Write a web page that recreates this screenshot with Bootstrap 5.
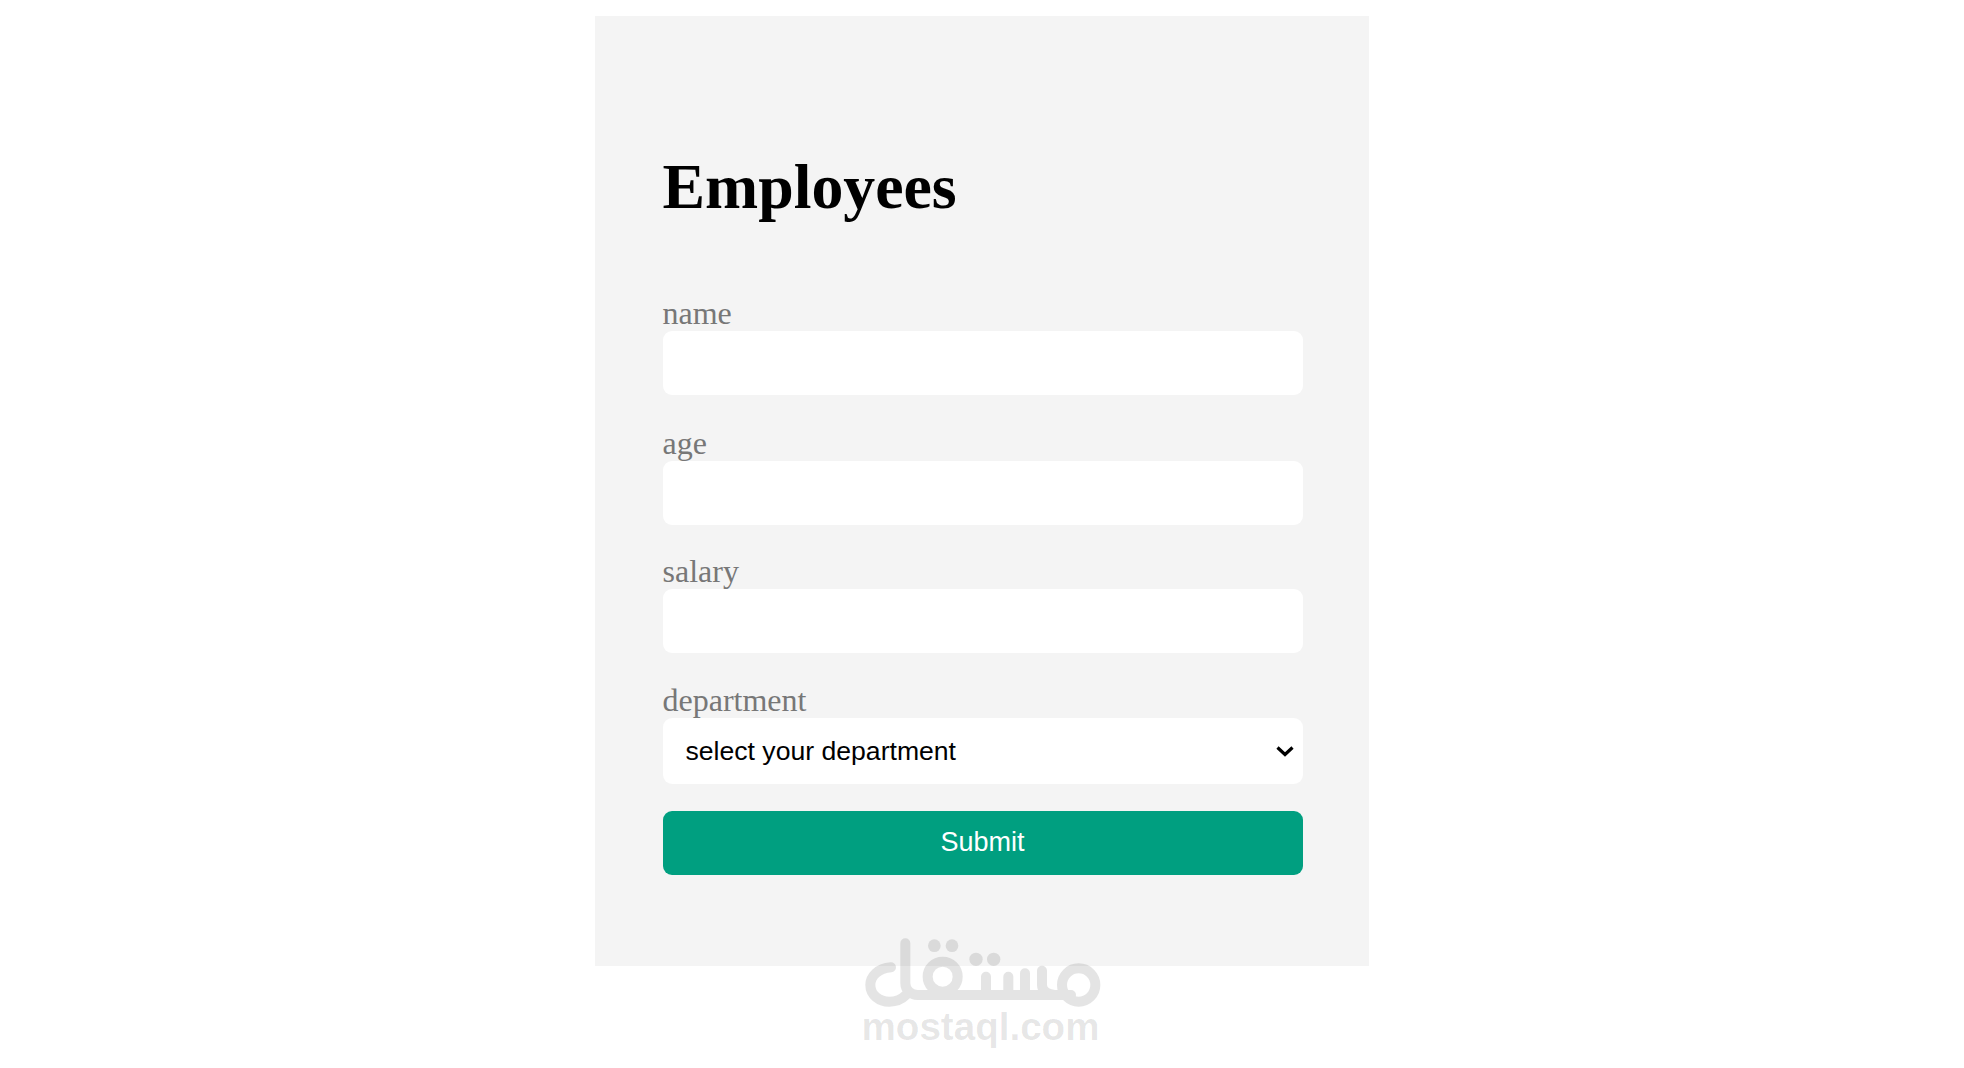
<!doctype html>
<html lang="en">
<head>
<meta charset="utf-8">
<title>Employees</title>
<link href="https://cdn.jsdelivr.net/npm/bootstrap@5.3.0/dist/css/bootstrap.min.css" rel="stylesheet">
<style>
body{background:#fff;min-height:1068px;font-family:"Liberation Sans",Arial,sans-serif}
.stage{position:relative;height:1068px;overflow:hidden}
.sheet{width:774px;height:950px;margin:16px auto 0;padding:134px 66.5px 0 67.5px;background:#f4f4f4}
.sheet h1{font:700 63.8px/73px "Liberation Serif","Times New Roman",serif;margin:0 0 71px;color:#000}
.fgroup{margin-bottom:28px}
.fgroup-a{margin-bottom:29px}
.fgroup-b{margin-bottom:27px}
.flabel{display:block;margin:0 0 -1px;padding-top:1px;font:400 32px/37px "Liberation Serif","Times New Roman",serif;color:#777}
.sheet .form-control{height:64px;border:0;border-radius:9px;background:#fff;width:640px}
.sheet .form-select{height:66px;width:640px;border:0;border-radius:9px;padding:2px 40px 0 23px;font:400 26.6px/1.2 "Liberation Sans",Arial,sans-serif;color:#000;
background-image:url("data:image/svg+xml,%3csvg xmlns='http://www.w3.org/2000/svg' viewBox='0 0 18 12'%3e%3cpath fill='none' stroke='%23000' stroke-width='3.2' d='m1.5 2.5 7.5 7 7.5-7'/%3e%3c/svg%3e");
background-position:right 9px center;background-size:18px 12px}
.sheet .go{display:block;width:640px;height:64px;padding:0 0 2px;border:0;border-radius:9px;background:#009f80;color:#fff;font:400 27px/1 "Liberation Sans",Arial,sans-serif}
.sgroup{margin-bottom:27px}
.wmark{position:absolute;left:840.5px;top:920px;width:280px;pointer-events:none}
.wmark svg{display:block;width:280px;height:88px}
.wtext{width:280px;margin-top:-3px;text-align:center;font:700 38.6px/44px "Liberation Sans",Arial,sans-serif;color:rgba(0,0,0,.1)}
</style>
</head>
<body>
<div class="stage">
  <div class="sheet">
    <h1>Employees</h1>
    <form>
      <div class="fgroup-a"><label class="flabel" for="fn">name</label><input id="fn" class="form-control" type="text"></div>
      <div class="fgroup-b"><label class="flabel" for="fa">age</label><input id="fa" class="form-control" type="text"></div>
      <div class="fgroup"><label class="flabel" for="fs">salary</label><input id="fs" class="form-control" type="text"></div>
      <div class="sgroup"><label class="flabel" for="fd">department</label>
        <select id="fd" class="form-select"><option>select your department</option></select></div>
      <button type="button" class="btn go">Submit</button>
    </form>
  </div>
  <div class="wmark" aria-hidden="true">
    <svg viewBox="0 0 840 264" xmlns="http://www.w3.org/2000/svg">
      <g opacity=".1">
        <g fill="none" stroke="#000" stroke-width="30" stroke-linecap="round" stroke-linejoin="round">
          <path d="M150 142C110 145 88 170 88 195C88 225 115 245 145 245C170 245 185 235 195 225"/>
          <path d="M193 70V190C193 210 210 225 230 225H690"/>
          <circle cx="305" cy="170" r="45"/>
          <circle cx="713" cy="195" r="50"/>
          <path d="M435 170V225M502 170V225M552 160V225"/>
          <path d="M603 152V195C603 212 618 222 640 225"/>
        </g>
        <circle cx="280" cy="77" r="19"/><circle cx="333" cy="77" r="19"/>
        <circle cx="405" cy="118" r="20"/><circle cx="458" cy="118" r="20"/>
      </g>
    </svg>
    <div class="wtext">mostaql.com</div>
  </div>
</div>
<script src="https://cdn.jsdelivr.net/npm/bootstrap@5.3.0/dist/js/bootstrap.bundle.min.js"></script>
</body>
</html>
